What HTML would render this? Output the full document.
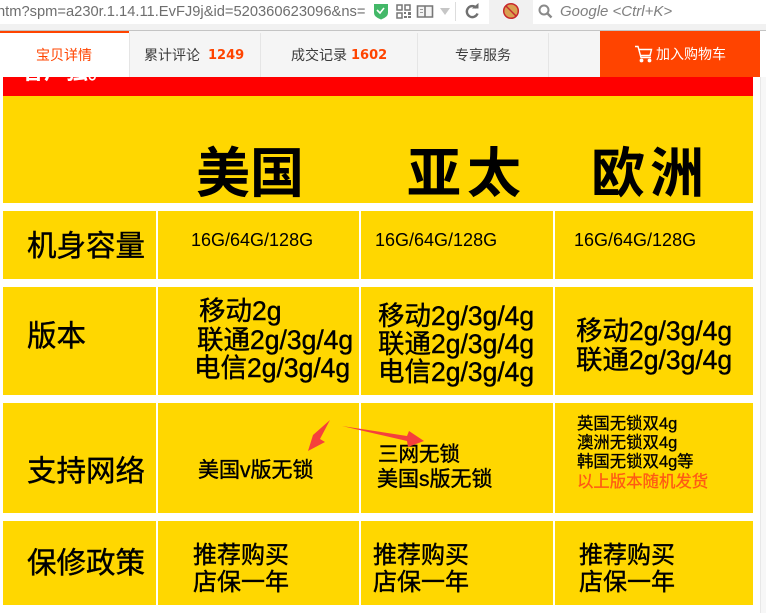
<!DOCTYPE html>
<html><head><meta charset="utf-8"><style>
*{margin:0;padding:0;box-sizing:border-box}
html,body{width:766px;height:613px;overflow:hidden;background:#fff}
body{position:relative;font-family:"Liberation Sans","Noto Sans CJK SC",sans-serif;color:#000}
.b{position:absolute}
.t{position:absolute;white-space:nowrap;line-height:1;color:#000}
.s{-webkit-text-stroke:.4px #000}
.tab{position:absolute;top:48px;font-size:14px;line-height:14px;color:#3c3c3c;white-space:nowrap}
.n{position:absolute;top:49px;line-height:14px;color:#ff4400;font-family:"DejaVu Sans",sans-serif;font-weight:bold;font-size:13px}
</style></head><body>
<!-- browser bar -->
<div class="b" style="left:0;top:0;width:766px;height:30px;background:#fff"></div>
<div class="b" style="left:0;top:24px;width:766px;height:6px;background:#f1f1f1"></div>
<div class="b" style="left:489px;top:0;width:44px;height:24px;background:#f1f1f1"></div>
<div class="b" style="left:0;top:30px;width:766px;height:1px;background:#c4c4c4"></div>
<div class="t" style="left:-3px;top:3px;font-size:14.7px;line-height:18px;color:#6e6e6e">htm?spm=a230r.1.14.11.EvFJ9j&amp;id=520360623096&amp;ns=</div>
<svg class="b" style="left:0;top:0" width="766" height="31" viewBox="0 0 766 31">
<path d="M374 4h14v9q0 4-7 6.500q-7-2.500-7-6.500z" fill="#43b868"/>
<path d="M377 10l3 3l4-5" fill="none" stroke="#fff" stroke-width="1.600"/>
<g fill="none" stroke="#777" stroke-width="1.500"><rect x="397" y="5" width="5" height="5"/><rect x="405" y="5" width="5" height="5"/><rect x="397" y="13" width="5" height="5"/></g>
<path d="M404 12h2v2h-2zM408 12h3v3h-3zM404 16h3v2h-3zM408 16h3v2h-3z" fill="#777"/>
<path d="M417.500 6h15v11h-15z M425 6v11" fill="#f4f4f4" stroke="#777" stroke-width="1.600"/>
<path d="M420 9.500h3M420 12.500h3" stroke="#999"/>
<path d="M440 8h10l-5 7z" fill="#c6c6c6"/>
<rect x="455" y="2" width="1" height="19" fill="#ddd"/>
<path d="M476.500 8a5.500 5.500 0 1 0 1 5.500" fill="none" stroke="#707070" stroke-width="2.400"/>
<path d="M472 8.500h6.500v-5.500z" fill="#707070"/>
<circle cx="511" cy="11" r="7.300" fill="#d9a050" stroke="#c8282c" stroke-width="1.500"/>
<path d="M506 6l10 10" stroke="#c8282c" stroke-width="1.500"/>
<circle cx="544" cy="10" r="4.500" fill="none" stroke="#8a8a8a" stroke-width="2"/>
<path d="M547.500 13.500l4 4" stroke="#8a8a8a" stroke-width="2.400"/>
</svg>
<div class="t" style="left:560px;top:3px;font-size:15px;line-height:18px;font-style:italic;color:#808080">Google &lt;Ctrl+K&gt;</div>

<!-- tab bar -->
<div class="b" style="left:0;top:31px;width:760px;height:46px;background:#f5f5f5"></div>
<div class="b" style="left:0;top:31px;width:129px;height:46px;background:#fff"></div>
<div class="b" style="left:0;top:31px;width:129px;height:2px;background:#ff4400"></div>
<div class="b" style="left:129px;top:33px;width:1px;height:44px;background:#e5e5e5"></div>
<div class="b" style="left:260px;top:33px;width:1px;height:44px;background:#e5e5e5"></div>
<div class="b" style="left:417px;top:33px;width:1px;height:44px;background:#e5e5e5"></div>
<div class="b" style="left:548px;top:33px;width:1px;height:44px;background:#e5e5e5"></div>
<div class="tab" style="left:36px;color:#ff4400">宝贝详情</div>
<div class="tab" style="left:144px">累计评论</div><div class="n" style="left:208px">1249</div>
<div class="tab" style="left:291px">成交记录</div><div class="n" style="left:351px">1602</div>
<div class="tab" style="left:455px">专享服务</div>
<div class="b" style="left:600px;top:31px;width:160px;height:46px;background:#ff4400"></div>
<svg class="b" style="left:634px;top:45px" width="20" height="19" viewBox="0 0 20 19" fill="none" stroke="#fff" stroke-width="1.400">
<path d="M1 1.500h3l3 11h10"/><path d="M5 4.500h12.500l-1.500 6h-9"/><circle cx="7.500" cy="15.500" r="1.200" fill="#fff"/><circle cx="15.500" cy="15.500" r="1.200" fill="#fff"/>
</svg>
<div class="t" style="left:656px;top:47px;font-size:14px;color:#fff">加入购物车</div>

<!-- red band -->
<div class="b" style="left:3px;top:77px;width:750px;height:19px;background:#ff0000"></div>
<div style="position:absolute;left:3px;top:77px;width:750px;height:19px;overflow:hidden">
<div class="t" style="left:19px;top:-16px;font-size:22px;font-weight:bold;color:#fff">各户独。</div>
</div>

<!-- yellow table -->
<div class="b" style="left:3px;top:96px;width:750px;height:107px;background:#ffd700"></div>
<div class="b" style="left:3px;top:211px;width:750px;height:68px;background:#ffd700"></div>
<div class="b" style="left:3px;top:287px;width:750px;height:108px;background:#ffd700"></div>
<div class="b" style="left:3px;top:403px;width:750px;height:110px;background:#ffd700"></div>
<div class="b" style="left:3px;top:521px;width:750px;height:84px;background:#ffd700"></div>
<div class="b" style="left:156px;top:211px;width:2px;height:394px;background:#fff"></div>
<div class="b" style="left:359px;top:211px;width:2px;height:394px;background:#fff"></div>
<div class="b" style="left:553px;top:211px;width:2px;height:394px;background:#fff"></div>
<div class="b" style="left:760px;top:77px;width:1px;height:536px;background:#e8e8e8"></div>
<div class="b" style="left:761px;top:77px;width:5px;height:536px;background:#f7f7f7"></div>

<!-- headers -->
<div class="t" style="left:196px;top:147px;font-size:54px;font-weight:bold">美国</div>
<div class="t" style="left:407px;top:147px;font-size:54px;font-weight:bold;letter-spacing:6px">亚太</div>
<div class="t" style="left:591px;top:147px;font-size:54px;font-weight:bold;letter-spacing:5px">欧洲</div>

<!-- row labels -->
<div class="t s" style="left:27px;top:232px;font-size:29.5px">机身容量</div>
<div class="t s" style="left:27px;top:322px;font-size:29.5px">版本</div>
<div class="t s" style="left:27px;top:457px;font-size:29.5px">支持网络</div>
<div class="t s" style="left:27px;top:549px;font-size:29.5px">保修政策</div>

<!-- row 1 -->
<div class="t" style="left:191px;top:231px;font-size:18px">16G/64G/128G</div>
<div class="t" style="left:375px;top:231px;font-size:18px">16G/64G/128G</div>
<div class="t" style="left:574px;top:231px;font-size:18px">16G/64G/128G</div>

<!-- row 2 -->
<div class="t s" style="left:199px;top:297px;font-size:26.5px;line-height:28px">移动2g</div>
<div class="t s" style="left:197px;top:326px;font-size:26.5px;line-height:28px">联通2g/3g/4g</div>
<div class="t s" style="left:194px;top:354px;font-size:26.5px;line-height:28px">电信2g/3g/4g</div>
<div class="t s" style="left:378px;top:302px;font-size:26.5px;line-height:28px">移动2g/3g/4g</div>
<div class="t s" style="left:378px;top:330px;font-size:26.5px;line-height:28px">联通2g/3g/4g</div>
<div class="t s" style="left:378px;top:358px;font-size:26.5px;line-height:28px">电信2g/3g/4g</div>
<div class="t s" style="left:576px;top:317px;font-size:26.5px;line-height:28px">移动2g/3g/4g</div>
<div class="t s" style="left:576px;top:346px;font-size:26.5px;line-height:28px">联通2g/3g/4g</div>

<!-- row 3 -->
<div class="t s" style="left:198px;top:460px;font-size:21px">美国v版无锁</div>
<div class="t s" style="left:378px;top:445px;font-size:20.5px">三网无锁</div>
<div class="t s" style="left:377px;top:469px;font-size:21px">美国s版无锁</div>
<div class="t" style="left:577px;top:416px;font-size:16.4px;-webkit-text-stroke:.3px #000">英国无锁双4g</div>
<div class="t" style="left:577px;top:435px;font-size:16.4px;-webkit-text-stroke:.3px #000">澳洲无锁双4g</div>
<div class="t" style="left:577px;top:454px;font-size:16.4px;-webkit-text-stroke:.3px #000">韩国无锁双4g等</div>
<div class="t" style="left:577px;top:474px;font-size:16.4px;color:#ff5a14;-webkit-text-stroke:.3px #ff5a14">以上版本随机发货</div>

<!-- arrows -->
<svg class="b" style="left:0;top:0" width="766" height="613" viewBox="0 0 766 613">
<path d="M330 420L313 435L308 451L325 442L320 439z" fill="#f5403c"/>
<path d="M342 426L407 436L409 431L424 441L408 447L407 441z" fill="#f5403c"/>
</svg>

<!-- row 4 -->
<div class="t s" style="left:193px;top:544px;font-size:24px">推荐购买</div>
<div class="t s" style="left:193px;top:571px;font-size:24px">店保一年</div>
<div class="t s" style="left:373px;top:544px;font-size:24px">推荐购买</div>
<div class="t s" style="left:373px;top:571px;font-size:24px">店保一年</div>
<div class="t s" style="left:579px;top:544px;font-size:24px">推荐购买</div>
<div class="t s" style="left:579px;top:571px;font-size:24px">店保一年</div>
</body></html>
